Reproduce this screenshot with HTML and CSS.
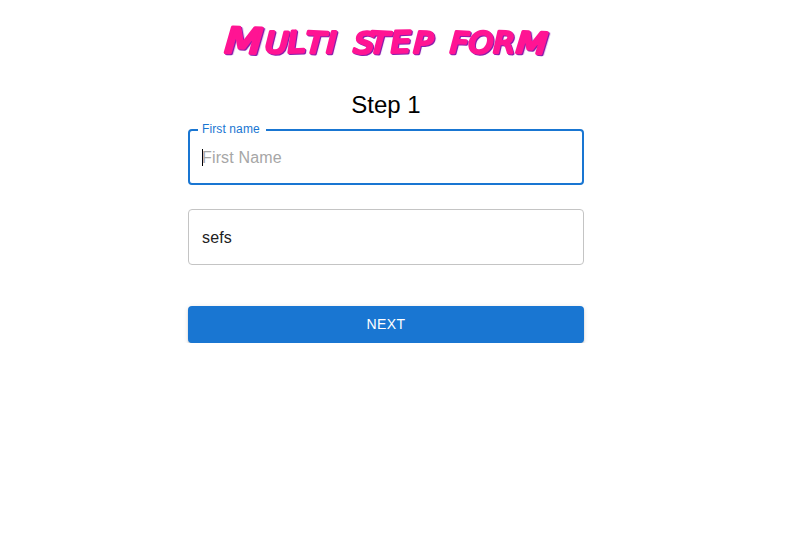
FILE: index.html
```
<!DOCTYPE html>
<html lang="en">
<head>
<meta charset="utf-8">
<title>Multi step form</title>
<link rel="stylesheet" href="styles.css">
</head>
<body>
<main class="form">
  <h1 class="title">
    <svg class="title-art" width="340" height="50" viewBox="216 15 340 50" role="img" aria-label="Multi step form">
      <text class="marker cap" transform="translate(224.5 52.5) scale(1.24 1)" rotate="2">M</text>
      <text class="marker" transform="translate(265 52.5) scale(1.08 1)" x="0 21.5 37.5 57" rotate="2 -3 3 2">ULTI</text>
      <text class="marker" transform="translate(353.5 52.5) scale(1.08 1)" x="0 14.5 35 55.5" rotate="4 3 -2 2">STEP</text>
      <text class="marker" transform="translate(450 52.5) scale(1.06 1)" x="0 17.5 41" rotate="3 2 1">FOR</text>
      <text class="marker" transform="translate(516 52.5) scale(1.22 1)" rotate="3">M</text>
    </svg>
  </h1>
  <h2 class="step">Step 1</h2>
  <div class="field focused">
    <span class="label">First name</span>
    <span class="caret"></span><span class="placeholder">First Name</span>
  </div>
  <div class="field">sefs</div>
  <button class="next" type="button">NEXT</button>
</main>
</body>
</html>
```

FILE: styles.css
```
* { box-sizing: border-box; }
body {
  margin: 0;
  background: #fff;
  font-family: "Liberation Sans", Arial, sans-serif;
}
.form {
  width: 396px;
  margin-left: 188px;
  padding-top: 15px;
  display: flex;
  flex-direction: column;
}
.title { margin: 0; height: 50px; text-align: center; }
.title-art { display: block; margin: 0 auto; overflow: visible; }
.marker {
  font: italic 400 29px "DejaVu Sans", sans-serif;
  fill: #ff1493;
  stroke: #ff1493;
  stroke-width: 3.2px;
  stroke-linejoin: round;
  filter: drop-shadow(1px 1px 0 #8a1cac);
}
.cap { font-size: 35px; }
.step {
  margin: 26px 0 10px;
  font-size: 24px;
  line-height: 28px;
  font-weight: 400;
  text-align: center;
  color: #000;
}
.field {
  position: relative;
  display: flex;
  align-items: center;
  height: 56px;
  padding: 0 13px;
  border: 1px solid #c4c4c4;
  border-radius: 4px;
  font-size: 16px;
  line-height: 23px;
  letter-spacing: 0.15px;
  color: #212121;
}
.focused {
  border: 2px solid #1976d2;
  padding: 0 12px;
  margin-bottom: 24px;
}
.label {
  position: absolute;
  left: 8px;
  top: -9px;
  padding: 0 6px 0 4px;
  background: #fff;
  color: #1976d2;
  font-size: 12px;
  line-height: 15px;
  letter-spacing: 0.11px;
}
.caret { width: 1px; height: 17px; margin-right: -1px; background: #000; }
.placeholder { color: #a6a6a6; }
.next {
  margin-top: 41px;
  height: 37px;
  padding: 0 0 2px;
  border: 0;
  border-radius: 4px;
  background: #1976d2;
  color: #fff;
  font: 400 14px/24px "Liberation Sans", Arial, sans-serif;
  letter-spacing: 0.4px;
  box-shadow: 0 3px 1px -2px rgba(0,0,0,.2), 0 2px 2px rgba(0,0,0,.14), 0 1px 5px rgba(0,0,0,.12);
}
```
